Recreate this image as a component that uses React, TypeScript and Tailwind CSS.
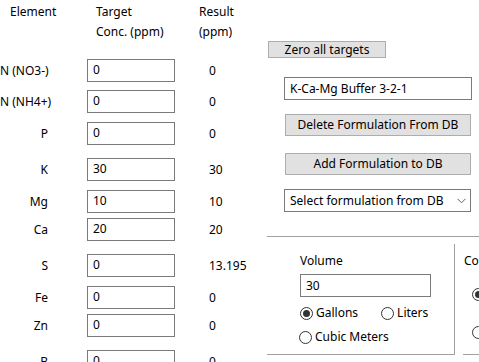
import React from "react";

const rows = [
  { el: "N (NO3-)", target: "0", result: "0", mt: "mt-[0px]" },
  { el: "N (NH4+)", target: "0", result: "0", mt: "mt-[8px]" },
  { el: "P", target: "0", result: "0", mt: "mt-[9px]" },
  { el: "K", target: "30", result: "30", mt: "mt-[13px]" },
  { el: "Mg", target: "10", result: "10", mt: "mt-[9px]" },
  { el: "Ca", target: "20", result: "20", mt: "mt-[5px]" },
  { el: "S", target: "0", result: "13.195", mt: "mt-[13px]" },
  { el: "Fe", target: "0", result: "0", mt: "mt-[9px]" },
  { el: "Zn", target: "0", result: "0", mt: "mt-[5px]" },
  { el: "B", target: "0", result: "0", mt: "mt-[13px]" },
];

function Radio({ checked }: { checked?: boolean }) {
  return (
    <span className="flex h-[13px] w-[13px] shrink-0 items-center justify-center rounded-full border border-[#333333] bg-white">
      {checked && <span className="h-[7px] w-[7px] rounded-full bg-[#333333]" />}
    </span>
  );
}

export default function App() {
  return (
    <div
      className="relative flex h-[362px] w-[479px] overflow-hidden bg-white text-[12px] leading-[16px] text-black"
      style={{ fontFamily: '"Noto Sans", "Open Sans", sans-serif' }}
    >
      {/* element table */}
      <div className="flex w-[267px] shrink-0 flex-col">
        <div className="flex h-[59px] shrink-0 pt-[4px]">
          <div className="w-[87px] pl-[10px]">Element</div>
          <div className="flex w-[112px] flex-col gap-[4px] pl-[9px]">
            <span>Target</span>
            <span>Conc. (ppm)</span>
          </div>
          <div className="flex flex-col gap-[4px]">
            <span>Result</span>
            <span>(ppm)</span>
          </div>
        </div>
        {rows.map((r) => (
          <div key={r.el} className={`flex h-[23px] shrink-0 items-center ${r.mt}`}>
            <div className="w-[48px] text-right whitespace-nowrap">{r.el}</div>
            <div className="ml-[39px] flex h-[23px] w-[88px] items-center border border-[#7a7a7a] pl-[5px] pb-[2px]">
              {r.target}
            </div>
            <div className="ml-[34px]">{r.result}</div>
          </div>
        ))}
      </div>

      {/* formulation controls */}
      <div className="flex flex-1 flex-col">
        <button className="ml-[1px] mt-[41px] flex h-[17px] w-[118px] shrink-0 items-center justify-center border border-[#adadad] bg-[#e1e1e1] leading-none">
          Zero all targets
        </button>
        <div className="ml-[17px] mt-[19px] flex h-[23px] w-[188px] shrink-0 items-center border border-[#7a7a7a] pl-[5px]">
          K-Ca-Mg Buffer 3-2-1
        </div>
        <button className="ml-[18px] mt-[14px] flex h-[22px] w-[186px] shrink-0 items-center justify-center border border-[#adadad] bg-[#e1e1e1]">
          Delete Formulation From DB
        </button>
        <button className="ml-[18px] mt-[17px] flex h-[22px] w-[186px] shrink-0 items-center justify-center border border-[#adadad] bg-[#e1e1e1]">
          Add Formulation to DB
        </button>
        <div className="ml-[17px] mt-[14px] flex h-[23px] w-[187px] shrink-0 items-center justify-between border border-[#7a7a7a] pl-[5px] pr-[4px]">
          <span>Select formulation from DB</span>
          <svg width="9" height="6" viewBox="0 0 9 6" className="mt-[1px]">
            <path d="M0.5 0.8 L4.5 4.8 L8.5 0.8" fill="none" stroke="#606060" strokeWidth="1" />
          </svg>
        </div>

        <div className="mt-[24px] h-px w-full shrink-0 bg-[#a0a0a0]" />

        <div className="flex shrink-0">
          <div className="mt-[7px] flex h-[111px] w-[188px] shrink-0 flex-col border-r border-b border-[#a0a0a0] pl-[33px]">
            <span className="mt-[9px]">Volume</span>
            <div className="mt-[5px] flex h-[23px] w-[131px] items-center border border-[#7a7a7a] pl-[5px]">30</div>
            <div className="mt-[8px] flex items-center">
              <Radio checked />
              <span className="ml-[3px]">Gallons</span>
              <span className="ml-[23px]">
                <Radio />
              </span>
              <span className="ml-[3px]">Liters</span>
            </div>
            <div className="-ml-[1px] mt-[8px] flex items-center">
              <Radio />
              <span className="ml-[3px]">Cubic Meters</span>
            </div>
          </div>
          <div className="ml-[8px] mt-[7px] flex h-[111px] flex-1 flex-col border-b border-[#a0a0a0] pl-[1px]">
            <span className="mt-[9px] whitespace-nowrap">Concentration</span>
            <div className="ml-[8px] mt-[19px]">
              <Radio checked />
            </div>
            <div className="ml-[8px] mt-[25px]">
              <Radio />
            </div>
          </div>
        </div>
      </div>
    </div>
  );
}
